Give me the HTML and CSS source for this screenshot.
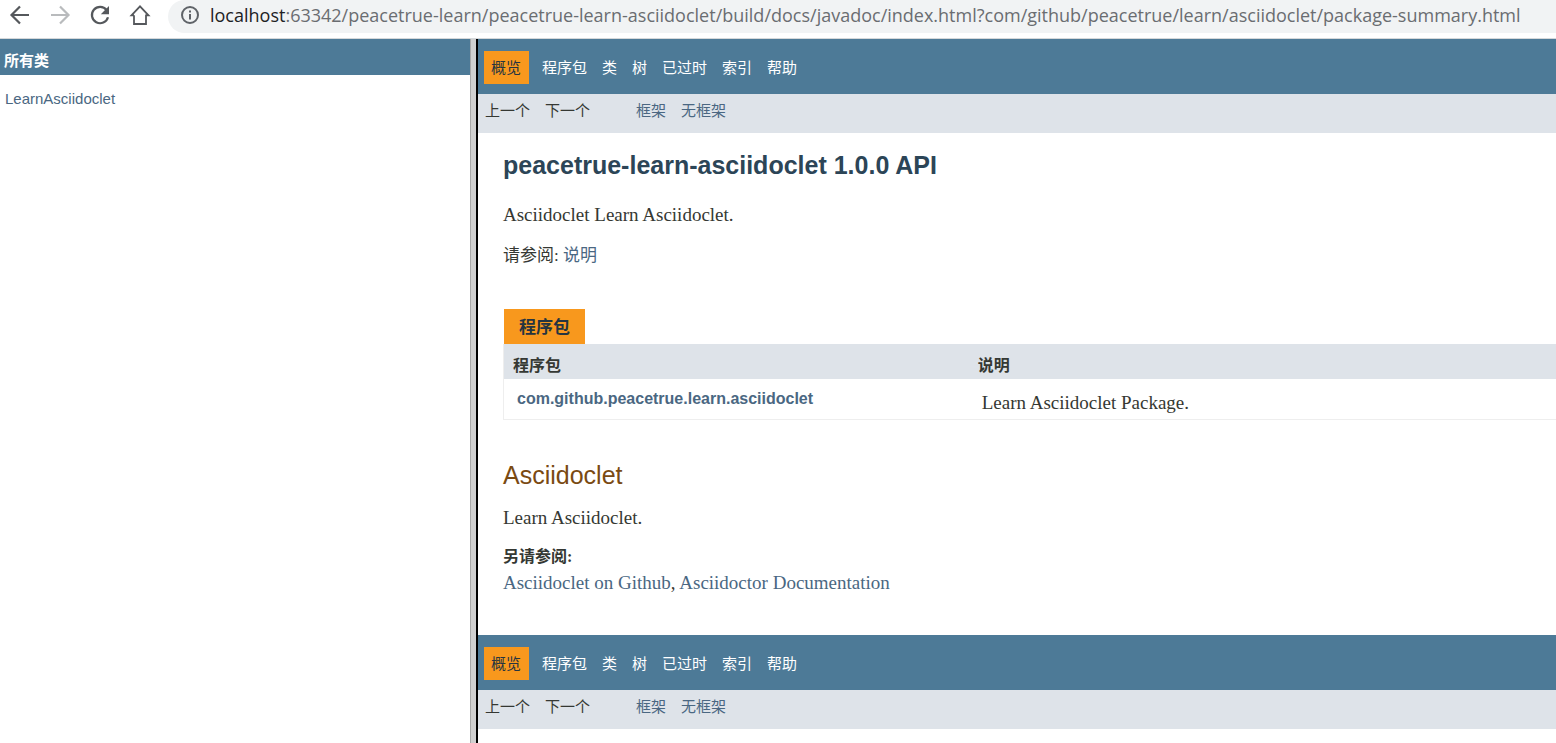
FILE: index.html
```html
<!DOCTYPE html>
<html lang="zh-CN">
<head>
<meta charset="utf-8">
<title>peacetrue-learn-asciidoclet 1.0.0 API</title>
<link rel="stylesheet" href="styles.css">
</head>
<body>
<header class="toolbar">
  <button class="tool" type="button" aria-label="Back">
    <svg viewBox="0 0 24 24"><path d="M21 12H4M12 3.500L3.500 12L12 20.500"/></svg>
  </button>
  <button class="tool tool-disabled" type="button" aria-label="Forward" disabled>
    <svg viewBox="0 0 24 24"><path d="M3 12H20M12 3.500L20.500 12L12 20.500"/></svg>
  </button>
  <button class="tool" type="button" aria-label="Reload">
    <svg viewBox="0 0 24 24"><path d="M18.600 7A8.200 8.200 0 1 0 20 14.300"/><path class="solid" d="M21 3V11.200H12.800Z"/></svg>
  </button>
  <button class="tool" type="button" aria-label="Home">
    <svg class="home" viewBox="0 0 24 24"><path d="M6 12.300H3.500L12 3.300L20.500 12.300H18V21H6V12.300"/></svg>
  </button>
  <div class="address">
    <svg class="info" viewBox="0 0 20 20" aria-hidden="true"><circle cx="10" cy="10" r="8"/><path d="M10 9V14.500M10 5.500V7.500"/></svg>
    <div class="url" role="textbox" aria-label="Address" contenteditable="true" spellcheck="false"><span class="host">localhost</span>:63342/peacetrue-learn/peacetrue-learn-asciidoclet/build/docs/javadoc/index.html?com/github/peacetrue/learn/asciidoclet/package-summary.html</div>
  </div>
</header>
<div class="frames">
  <aside class="classes">
    <h1 class="classes-title">所有类</h1>
    <ul class="class-list">
      <li><a href="#">LearnAsciidoclet</a></li>
    </ul>
  </aside>
  <div class="splitter"></div>
  <main class="overview">
    <nav class="top-nav">
      <span class="current">概览</span>
      <a href="#">程序包</a><a href="#">类</a><a href="#">树</a><a href="#">已过时</a><a href="#">索引</a><a href="#">帮助</a>
    </nav>
    <div class="sub-nav">
      <div class="sub-group"><span>上一个</span><span>下一个</span></div>
      <div class="sub-group"><a href="#">框架</a><a href="#">无框架</a></div>
    </div>
    <div class="content">
      <h1 class="title">peacetrue-learn-asciidoclet 1.0.0 API</h1>
      <p class="text">Asciidoclet Learn Asciidoclet.</p>
      <p class="text see">请参阅: <a href="#description">说明</a></p>
      <table class="packages">
        <caption><span>程序包</span></caption>
        <thead><tr><th class="name-col" scope="col">程序包</th><th scope="col">说明</th></tr></thead>
        <tbody><tr><td class="name"><a href="#">com.github.peacetrue.learn.asciidoclet</a></td><td class="summary">Learn Asciidoclet Package.</td></tr></tbody>
      </table>
      <h2 class="section-title" id="description">Asciidoclet</h2>
      <p class="text">Learn Asciidoclet.</p>
      <dl class="also">
        <dt>另请参阅:</dt>
        <dd><a href="#">Asciidoclet on Github</a>, <a href="#">Asciidoctor Documentation</a></dd>
      </dl>
    </div>
    <nav class="top-nav">
      <span class="current">概览</span>
      <a href="#">程序包</a><a href="#">类</a><a href="#">树</a><a href="#">已过时</a><a href="#">索引</a><a href="#">帮助</a>
    </nav>
    <div class="sub-nav">
      <div class="sub-group"><span>上一个</span><span>下一个</span></div>
      <div class="sub-group"><a href="#">框架</a><a href="#">无框架</a></div>
    </div>
  </main>
</div>
</body>
</html>
```
FILE: styles.css
```css
* { box-sizing: border-box; }

body {
  margin: 0;
  min-height: 100vh;
  display: flex;
  flex-direction: column;
  background: #fff;
  color: #353833;
  font-family: "Liberation Sans", "Noto Sans CJK SC", sans-serif;
  font-size: 15px;
}

a { color: #4a6782; text-decoration: none; }

.toolbar {
  display: flex;
  align-items: flex-start;
  gap: 16px;
  height: 39px;
  padding-left: 8px;
  border-bottom: 1px solid #d5d8da;
}

.tool {
  flex: none;
  width: 24px;
  height: 24px;
  margin-top: 3px;
  padding: 0;
  border: 0;
  background: none;
  color: #55585c;
}
.tool-disabled { color: #b9bbbd; }
.tool svg { display: block; width: 24px; height: 24px; fill: none; stroke: currentColor; stroke-width: 2.2; }
.tool .home { stroke-width: 1.8; }
.tool .solid { fill: currentColor; stroke: none; }

.address {
  flex: 1;
  min-width: 0;
  display: flex;
  align-items: center;
  gap: 10px;
  height: 33px;
  padding: 0 0 3px 12px;
  border-bottom-left-radius: 18px;
  border-top-left-radius: 18px;
  background: #f1f3f4;
}
.info { flex: none; width: 20px; height: 20px; fill: none; stroke: #5f6368; stroke-width: 2; }
.url {
  overflow: hidden;
  white-space: nowrap;
  color: #6a6d71;
  font-family: "Open Sans", "Noto Sans", sans-serif;
  font-size: 18px;
  line-height: 28px;
}
.host { color: #202124; }

.frames {
  flex: 1;
  display: grid;
  grid-template-columns: 470fr 8px 1078fr;
}

.classes-title {
  margin: 0;
  padding: 10px 4px 2px;
  background: #4d7a97;
  color: #fff;
  font-size: 15px;
  line-height: 24px;
}
.class-list { margin: 0; padding: 14px 5px; list-style: none; line-height: 20px; }

.splitter {
  border-left: 1px solid #a8a8a8;
  border-right: 2px solid #000;
  background: #d0d0d0;
}

.overview { min-width: 0; }

.top-nav {
  display: flex;
  align-items: center;
  gap: 15px;
  height: 55px;
  padding: 2px 6px 0;
  background: #4d7a97;
  line-height: 33px;
}
.top-nav a { color: #fff; }
.current { margin-right: -2px; padding: 0 8px 0 7px; background: #f8981d; color: #253441; }

.sub-nav {
  display: flex;
  gap: 46px;
  height: 39px;
  padding: 5px 7px;
  background: #dee3e9;
  line-height: 24px;
}
.sub-group { display: flex; gap: 15px; }

.content { padding: 16px 0 39px 25px; }

.title { margin: 0; color: #2c4557; font-size: 25px; line-height: 32px; }

.text {
  margin: 22px 0 0;
  font-family: "Liberation Serif", "Noto Sans CJK SC", serif;
  font-size: 19px;
  line-height: 24px;
}
.see { margin-top: 17px; font-size: 17px; }

.packages { width: 100%; margin-top: 41px; border-collapse: collapse; border: 1px solid #eee; border-top: 0; border-right: 0; }
.packages caption { text-align: left; }
.packages caption span {
  display: inline-block;
  margin-left: 1px;
  padding: 2px 15px 0;
  background: #f8981d;
  color: #253441;
  font-size: 17px;
  font-weight: 700;
  line-height: 33px;
  vertical-align: top;
}
.packages th { padding: 9px 9px 1px; background: #dee3e9; font-size: 16px; line-height: 25px; text-align: left; }
.packages td { padding: 8px 13px; vertical-align: top; }
.packages .name-col { width: 44.2%; }
.name { font-size: 16px; font-weight: 700; line-height: 24px; }
.packages .summary { padding-top: 12px; padding-bottom: 4px; font-family: "Liberation Serif", serif; font-size: 19px; line-height: 24px; }

.section-title { margin: 40px 0 0; color: #7a4a12; font-size: 25px; font-weight: 400; line-height: 30px; }
.section-title + .text { margin-top: 16px; }

.also { margin: 14px 0 0; font-family: "Liberation Serif", "Noto Sans CJK SC", serif; font-size: 19px; line-height: 26px; }
.also dt { font-size: 16px; font-weight: 700; }
.also dd { margin: 0; }
```
